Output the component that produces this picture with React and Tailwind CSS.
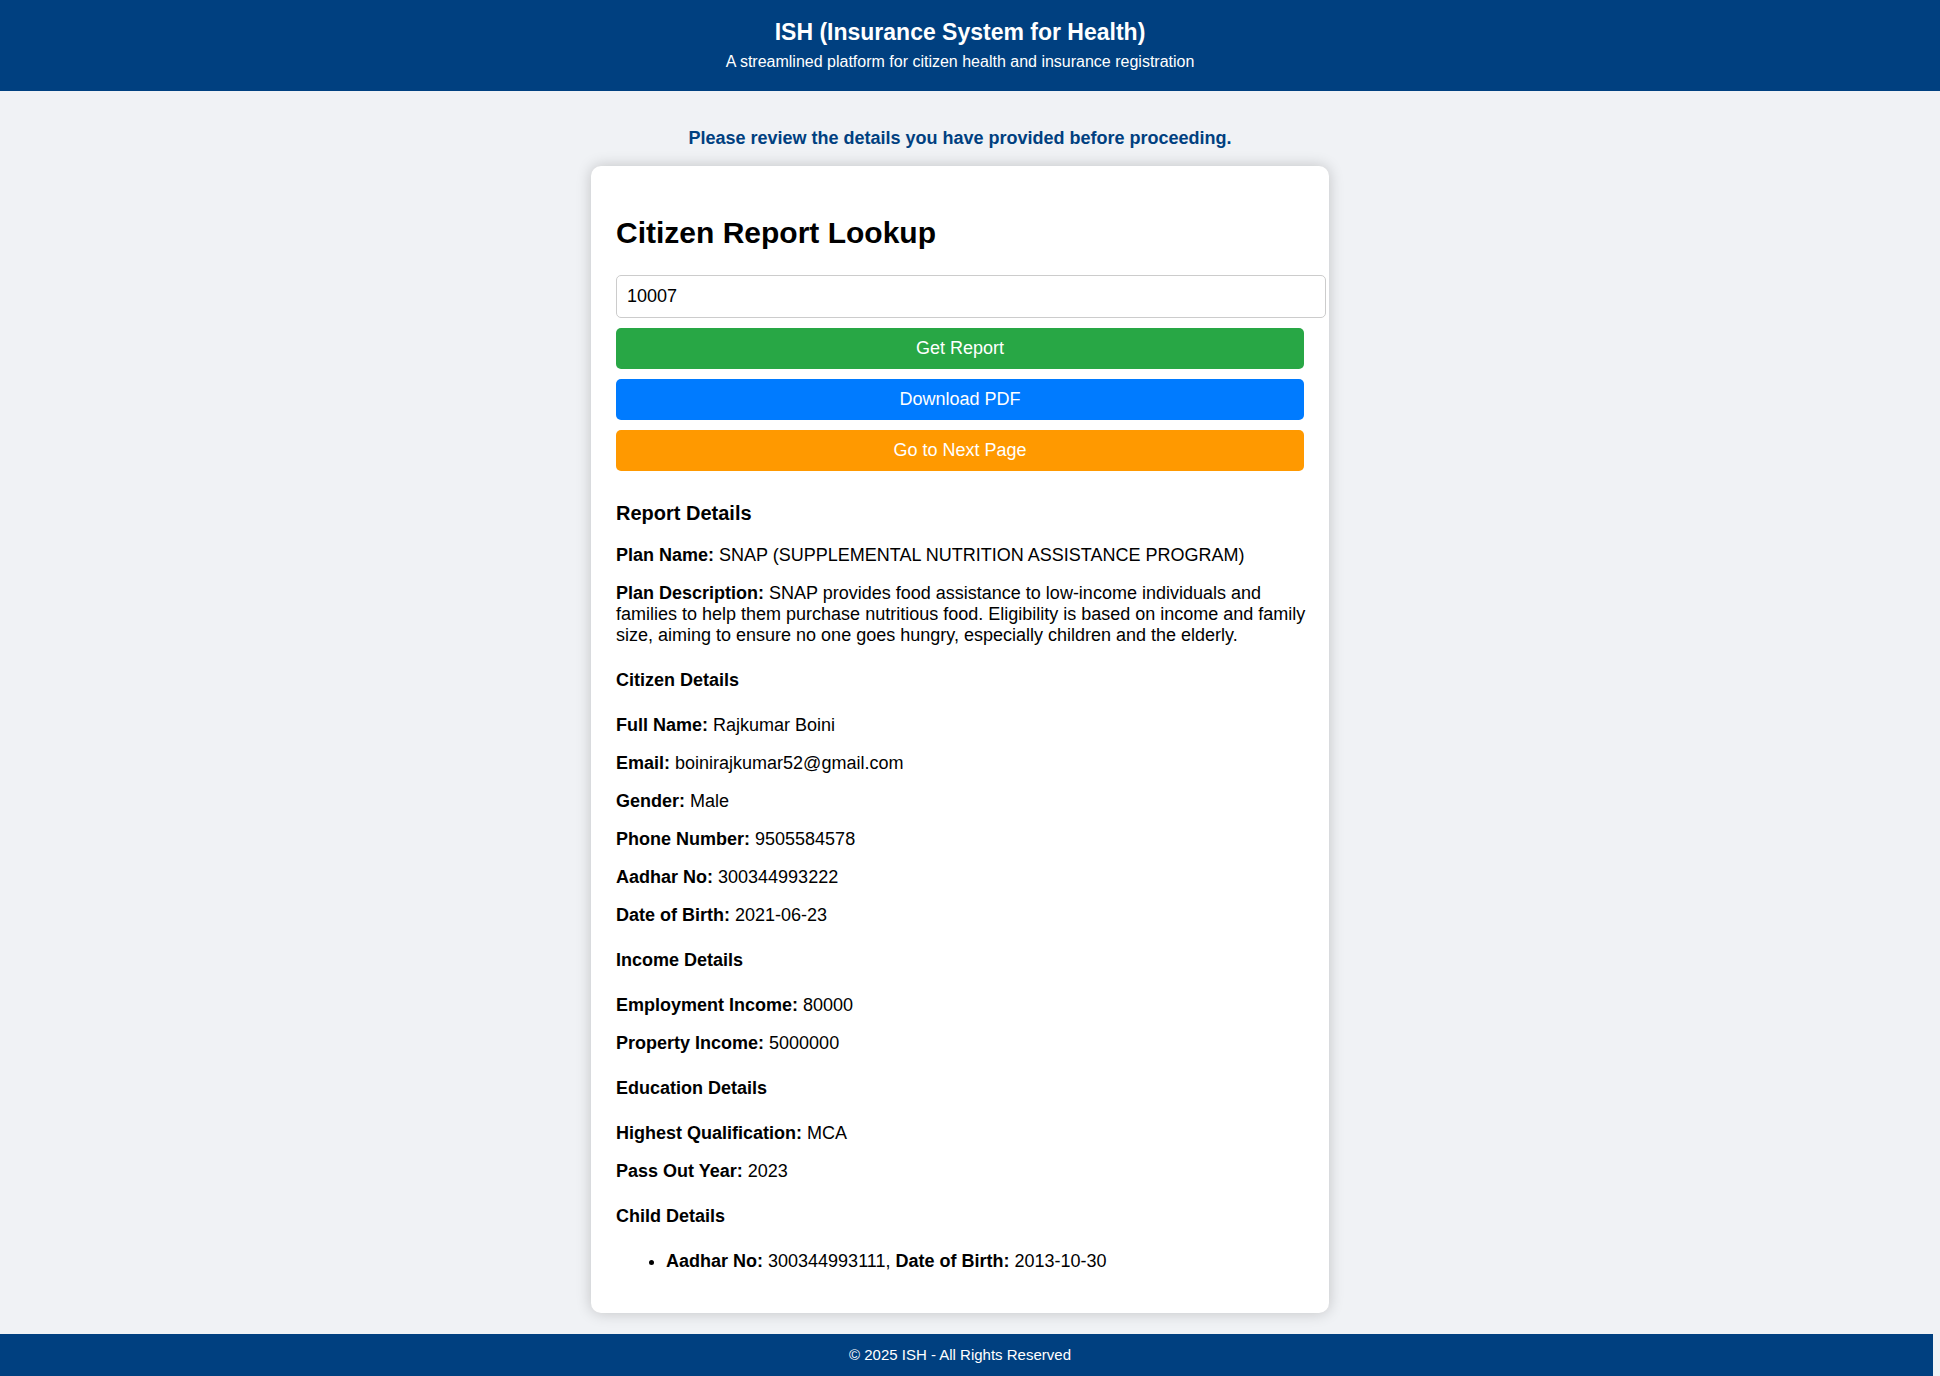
import { useState } from "react";

const sections = [
  {
    title: "Citizen Details",
    rows: [
      ["Full Name", "Rajkumar Boini"],
      ["Email", "boinirajkumar52@gmail.com"],
      ["Gender", "Male"],
      ["Phone Number", "9505584578"],
      ["Aadhar No", "300344993222"],
      ["Date of Birth", "2021-06-23"],
    ],
  },
  {
    title: "Income Details",
    rows: [
      ["Employment Income", "80000"],
      ["Property Income", "5000000"],
    ],
  },
  {
    title: "Education Details",
    rows: [
      ["Highest Qualification", "MCA"],
      ["Pass Out Year", "2023"],
    ],
  },
];

const children = [{ aadhar: "300344993111", dob: "2013-10-30" }];

function Field({ label, children }) {
  return (
    <p>
      <strong className="font-bold">{label}:</strong> {children}
    </p>
  );
}

function Section({ title, children }) {
  return (
    <section className="mt-6 flex flex-col gap-6">
      <h4 className="font-bold">{title}</h4>
      {children}
    </section>
  );
}

function ActionButton({ className, children }) {
  return (
    <button
      type="button"
      className={`w-full cursor-pointer rounded-[5px] py-[10px] text-white ${className}`}
    >
      {children}
    </button>
  );
}

export default function App() {
  const [citizenId, setCitizenId] = useState("10007");

  return (
    <div className="flex min-h-screen flex-col bg-[#f0f2f5] font-['Liberation_Sans',Arial,sans-serif] text-[18px] leading-[21px] text-black">
      <header className="bg-[#004080] py-[18px] pr-5 text-center text-white">
        <h1 className="text-[23px] leading-7 font-bold">ISH (Insurance System for Health)</h1>
        <p className="mt-1 text-[16px] leading-[23px]">
          A streamlined platform for citizen health and insurance registration
        </p>
      </header>

      <main className="flex grow flex-col items-center pt-[37px] pr-5 pb-[21px]">
        <p className="font-bold text-[#004080]">
          Please review the details you have provided before proceeding.
        </p>

        <div className="mt-[17px] w-full max-w-[738px] grow rounded-[10px] bg-white px-[25px] pt-[49px] pb-10 shadow-[0_0_15px_rgba(0,0,0,0.2)]">
          <h2 className="text-[30px] leading-9 font-bold">Citizen Report Lookup</h2>

          <form className="mt-6 flex flex-col gap-[10px]" onSubmit={(e) => e.preventDefault()}>
            <input
              type="text"
              aria-label="Citizen ID"
              value={citizenId}
              onChange={(e) => setCitizenId(e.target.value)}
              className="-mr-[22px] rounded-[5px] border border-[#cccccc] bg-white p-[10px] outline-none"
            />
            <ActionButton className="bg-[#28a745]">Get Report</ActionButton>
            <ActionButton className="bg-[#007bff]">Download PDF</ActionButton>
            <ActionButton className="bg-[#ff9900]">Go to Next Page</ActionButton>
          </form>

          <h3 className="mt-[30px] text-[20px] leading-6 font-bold">Report Details</h3>
          <div className="mt-5 -mr-2 flex flex-col gap-[17px]">
            <Field label="Plan Name">SNAP (SUPPLEMENTAL NUTRITION ASSISTANCE PROGRAM)</Field>
            <Field label="Plan Description">
              SNAP provides food assistance to low-income individuals and families to help them
              purchase nutritious food. Eligibility is based on income and family size, aiming to
              ensure no one goes hungry, especially children and the elderly.
            </Field>
          </div>

          {sections.map(({ title, rows }) => (
            <Section key={title} title={title}>
              <div className="flex flex-col gap-[17px]">
                {rows.map(([label, value]) => (
                  <Field key={label} label={label}>
                    {value}
                  </Field>
                ))}
              </div>
            </Section>
          ))}

          <Section title="Child Details">
            <ul className="list-disc pl-[50px]">
              {children.map(({ aadhar, dob }) => (
                <li key={aadhar}>
                  <strong className="font-bold">Aadhar No:</strong> {aadhar},{" "}
                  <strong className="font-bold">Date of Birth:</strong> {dob}
                </li>
              ))}
            </ul>
          </Section>
        </div>
      </main>

      <footer className="mr-[7px] bg-[#004080] py-[10px] pr-[13px] text-center text-[15px] leading-[22px] text-white">
        <p>© 2025 ISH - All Rights Reserved</p>
      </footer>
    </div>
  );
}
